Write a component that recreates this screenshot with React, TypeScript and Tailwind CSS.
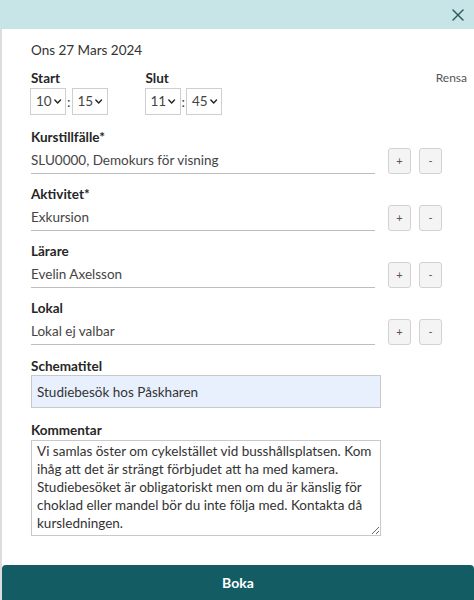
import {ChevronDown, X} from "lucide-react"

const font = {fontFamily: "Lato, 'Open Sans', sans-serif"}

function TimeSelect({value}: {value: string}) {
  return (
    <div className="flex h-[27px] w-[36px] items-center justify-between border border-[#cfcfcf] bg-white pl-[5px] pr-[2px] text-[13.5px] text-[#444]">
      <span>{value}</span>
      <ChevronDown size={15} strokeWidth={3} className="text-[#222]" />
    </div>
  )
}

function SmallButton({label}: {label: string}) {
  return (
    <button className="flex h-[26px] w-[23px] items-center justify-center rounded-[3px] border border-[#d2d2d2] bg-[#f4f4f4] text-[11px] text-[#555]">
      {label}
    </button>
  )
}

function PickField({label, value}: {label: string; value: string}) {
  return (
    <div className="flex flex-col">
      <div className="h-[18px] text-[13.5px] font-bold leading-[18px] text-[#262626]">{label}</div>
      <div className="mt-[2px] flex items-end">
        <div className="w-[344px] border-b border-[#bdbdbd] pb-[3px] text-[13.5px] leading-[20px] text-[#444]">
          {value}
        </div>
        <div className="ml-[13px] flex gap-[8px]">
          <SmallButton label="+" />
          <SmallButton label="-" />
        </div>
      </div>
    </div>
  )
}

export default function App() {
  return (
    <div style={font} className="flex h-[600px] w-[474px] flex-col overflow-hidden bg-white">
      {/* Header */}
      <div className="flex h-[29px] shrink-0 items-center justify-end bg-[#c7e4e6] pr-[6px]">
        <X size={20} strokeWidth={1.8} className="text-[#2d5c60]" />
      </div>

      <div className="flex flex-1">
        <div className="w-[2px] shrink-0 bg-[#dcdcdc]" />

        <div className="flex flex-1 flex-col">
          <div className="flex flex-1 flex-col pl-[28px] pr-[7px] pt-[11px]">
            <div className="pl-[1px] text-[13.5px] leading-[20px] text-[#333]">Ons 27 Mars 2024</div>

            {/* Time */}
            <div className="mt-[9px] flex items-start">
              <div className="flex flex-col">
                <div className="pl-[1px] text-[13.5px] font-bold leading-[18px] text-[#262626]">Start</div>
                <div className="mt-[1px] flex items-center">
                  <TimeSelect value="10" />
                  <span className="mx-[1px] text-[14px] text-[#444]">:</span>
                  <TimeSelect value="15" />
                </div>
              </div>
              <div className="ml-[37px] flex flex-col">
                <div className="pl-[1px] text-[13.5px] font-bold leading-[18px] text-[#262626]">Slut</div>
                <div className="mt-[1px] flex items-center">
                  <TimeSelect value="11" />
                  <span className="mx-[1px] text-[14px] text-[#444]">:</span>
                  <TimeSelect value="45" />
                </div>
              </div>
              <div className="ml-auto text-[12px] leading-[18px] text-[#555]">Rensa</div>
            </div>

            <div className="mt-[13px] flex flex-col gap-[11px] pl-[1px]">
              <PickField label="Kurstillfälle*" value="SLU0000, Demokurs för visning" />
              <PickField label="Aktivitet*" value="Exkursion" />
              <PickField label="Lärare" value="Evelin Axelsson" />
              <PickField label="Lokal" value="Lokal ej valbar" />
            </div>

            <div className="mt-[12px] pl-[1px] text-[13.5px] font-bold leading-[18px] text-[#262626]">Schematitel</div>
            <input
              readOnly
              value="Studiebesök hos Påskharen"
              className="ml-[1px] h-[33px] w-[350px] border border-[#c9c9c9] bg-[#e8f0fe] px-[5px] text-[13.5px] text-[#333] outline-none"
              style={font}
            />

            <div className="mt-[13px] pl-[1px] text-[13.5px] font-bold leading-[18px] text-[#262626]">Kommentar</div>
            <textarea
              readOnly
              value="Vi samlas öster om cykelstället vid busshållsplatsen. Kom ihåg att det är strängt förbjudet att ha med kamera. Studiebesöket är obligatoriskt men om du är känslig för choklad eller mandel bör du inte följa med. Kontakta då kursledningen."
              className="ml-[1px] mt-[1px] h-[96px] w-[350px] resize border border-[#c9c9c9] bg-white pl-[5px] pr-[2px] pt-[1px] text-[13.5px] leading-[18px] text-[#333] outline-none"
              style={font}
            />
          </div>

          <button className="h-[35px] w-full rounded-t-[4px] bg-[#135c64] text-[14px] font-bold text-white">
            Boka
          </button>
        </div>
      </div>
    </div>
  )
}
